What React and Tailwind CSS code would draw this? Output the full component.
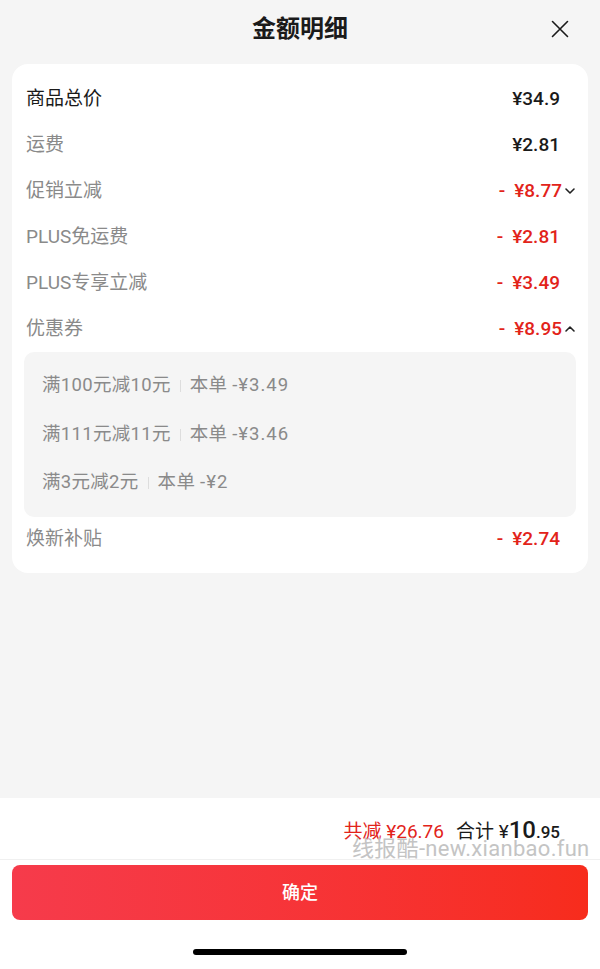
import React from "react";

const font = { fontFamily: '"Roboto", "Noto Sans CJK SC", sans-serif' };

function Chevron({ up }) {
  return (
    <svg width="12" height="12" viewBox="0 0 12 12" className="ml-[2px]">
      <path
        d={up ? "M2 8 L6 4 L10 8" : "M2 4 L6 8 L10 4"}
        fill="none"
        stroke="#222"
        strokeWidth="1.6"
        strokeLinecap="round"
        strokeLinejoin="round"
      />
    </svg>
  );
}

function Row({ label, value, red, dark, chevron }) {
  return (
    <div className="h-[46px] flex items-center justify-between pl-[2px]">
      <span className={`text-[19px] ${dark ? "text-[#1a1a1a]" : "text-[#8a8a8a]"}`}>{label}</span>
      <div className="flex items-center">
        {red && <span className="text-[19px] font-medium text-[#e2231a] mr-[9px]">-</span>}
        <span className={`text-[19px] font-medium ${red ? "text-[#e2231a]" : "text-[#1a1a1a]"}`}>{value}</span>
        {chevron ? <Chevron up={chevron === "up"} /> : <span className="w-[16px]" />}
      </div>
    </div>
  );
}

function Coupon({ a, b }) {
  return (
    <div className="h-[48.5px] flex items-center text-[18.5px] text-[#8a8a8a] tracking-[0.3px]">
      <span>{a}</span>
      <span className="mx-[9px] w-px h-[12px] bg-[#dddddd]" />
      <span>本单 <span className="tracking-[1px]">{b}</span></span>
    </div>
  );
}

export default function App() {
  return (
    <div className="w-[600px] h-[969px] flex flex-col bg-[#f5f5f5] overflow-hidden" style={font}>
      <div className="relative h-[58px] flex items-center justify-center shrink-0">
        <span className="text-[24px] font-bold text-[#1a1a1a]">金额明细</span>
        <svg width="18" height="18" viewBox="0 0 18 18" className="absolute right-[31px] top-[20px]">
          <path d="M1.5 1.5 L16.5 16.5 M16.5 1.5 L1.5 16.5" stroke="#1a1a1a" strokeWidth="1.6" strokeLinecap="round" />
        </svg>
      </div>

      <div className="mx-3 mt-[6px] bg-white rounded-[16px] px-3 pt-[12px] pb-[10px] shrink-0">
        <Row label="商品总价" value="¥34.9" dark />
        <Row label="运费" value="¥2.81" />
        <Row label="促销立减" value="¥8.77" red chevron="down" />
        <Row label="PLUS免运费" value="¥2.81" red />
        <Row label="PLUS专享立减" value="¥3.49" red />
        <Row label="优惠券" value="¥8.95" red chevron="up" />
        <div className="bg-[#f5f5f5] rounded-[10px] pt-[10px] pb-[9px] pl-[18px]">
          <Coupon a="满100元减10元" b="-¥3.49" />
          <Coupon a="满111元减11元" b="-¥3.46" />
          <Coupon a="满3元减2元" b="-¥2" />
        </div>
        <Row label="焕新补贴" value="¥2.74" red />
      </div>

      <div className="flex-1" />

      <div className="bg-white h-[171px] shrink-0 flex flex-col">
        <div className="relative h-[62px] border-b border-[#f0f0f0] flex items-start justify-end pr-[40px] pt-[14px]">
          <div className="flex items-baseline">
            <span className="text-[19px] text-[#e2231a]">共减 ¥26.76</span>
            <span className="ml-[12px] text-[19px] text-[#1a1a1a]">合计 ¥</span>
            <span className="text-[24px] text-[#1a1a1a] font-medium">10</span>
            <span className="text-[17px] text-[#1a1a1a] font-medium">.95</span>
          </div>
          <span className="absolute left-[352px] top-[39px] text-[22px] leading-[24px] text-[#c4c4c4] whitespace-nowrap tracking-[0.3px]">
            线报酷-new.xianbao.fun
          </span>
        </div>
        <div className="px-3 pt-[5px]">
          <div className="h-[55px] rounded-[8px] bg-gradient-to-r from-[#f63b4b] to-[#f72c1c] flex items-center justify-center">
            <span className="text-white text-[18px] font-medium">确定</span>
          </div>
        </div>
        <div className="flex-1 flex items-start justify-center pt-[29px]">
          <div className="w-[214px] h-[6px] rounded-full bg-black" />
        </div>
      </div>
    </div>
  );
}
